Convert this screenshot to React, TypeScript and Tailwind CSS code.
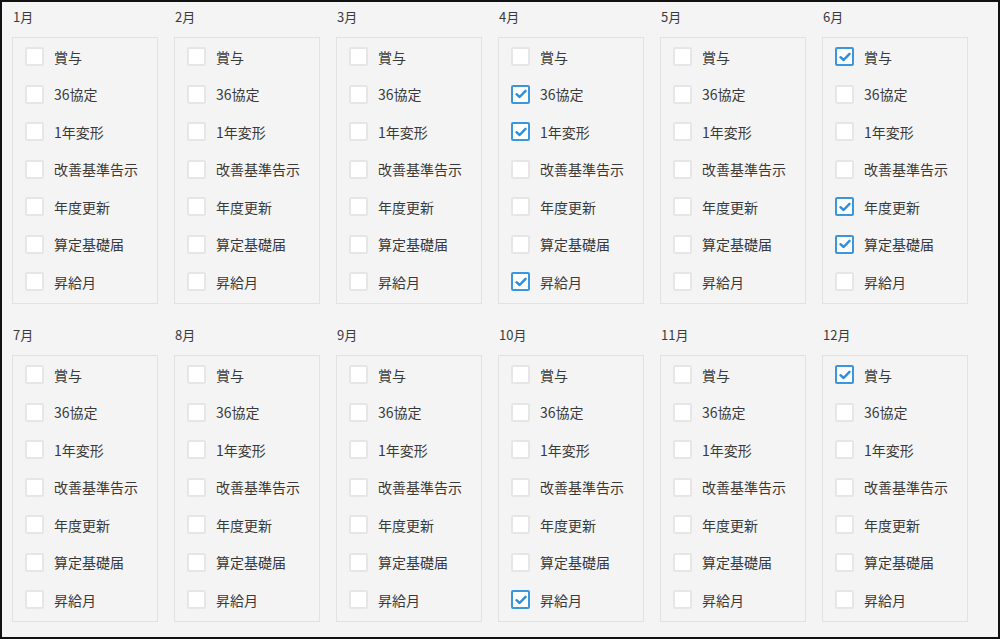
import React, { useState } from 'react';

const ITEMS = ['賞与', '36協定', '1年変形', '改善基準告示', '年度更新', '算定基礎届', '昇給月'];

const INITIAL: Record<number, string[]> = {
  4: ['36協定', '1年変形', '昇給月'],
  6: ['賞与', '年度更新', '算定基礎届'],
  10: ['昇給月'],
  12: ['賞与'],
};

const CheckBox: React.FC<{ checked: boolean; label: string; onToggle: () => void }> = ({
  checked,
  label,
  onToggle,
}) => (
  <label className="flex items-center h-[37.5px] cursor-pointer select-none" onClick={onToggle}>
    <span
      className={`w-[19px] h-[19px] rounded-[2px] border-2 bg-white flex items-center justify-center flex-shrink-0 ${
        checked ? 'border-[#3a97dd]' : 'border-[#e6e6e6]'
      }`}
    >
      {checked && (
        <svg width="12" height="10" viewBox="0 0 12 10" fill="none">
          <path d="M1.5 5.2 L4.6 8 L10.5 1.8" stroke="#2d8fdb" strokeWidth="2.4" strokeLinecap="round" strokeLinejoin="round" />
        </svg>
      )}
    </span>
    <span className="ml-[10px] text-[14px] text-[#3a3a3a] leading-none">{label}</span>
  </label>
);

export default function App() {
  const [checked, setChecked] = useState<Record<number, string[]>>(INITIAL);

  const toggle = (month: number, item: string) => {
    setChecked((prev) => {
      const cur = prev[month] || [];
      const next = cur.includes(item) ? cur.filter((i) => i !== item) : [...cur, item];
      return { ...prev, [month]: next };
    });
  };

  const months = Array.from({ length: 12 }, (_, i) => i + 1);

  return (
    <div
      className="w-[1000px] h-[639px] bg-[#f4f4f4] border-2 border-[#111] overflow-hidden"
      style={{ fontFamily: '"Noto Sans CJK JP", "Noto Sans", sans-serif' }}
    >
      <div className="grid grid-cols-[repeat(6,146px)] gap-x-[16px] gap-y-[21px] pl-[10px] pt-[5px]">
        {months.map((m) => (
          <div key={m}>
            <div className="h-[20px] leading-[20px] text-[13px] text-[#3a3a3a] pl-[1px]">{m}月</div>
            <div className="mt-[10px] h-[267px] border border-[#e2e2e2] pl-[12px]">
              {ITEMS.map((item) => (
                <CheckBox
                  key={item}
                  label={item}
                  checked={(checked[m] || []).includes(item)}
                  onToggle={() => toggle(m, item)}
                />
              ))}
            </div>
          </div>
        ))}
      </div>
    </div>
  );
}
